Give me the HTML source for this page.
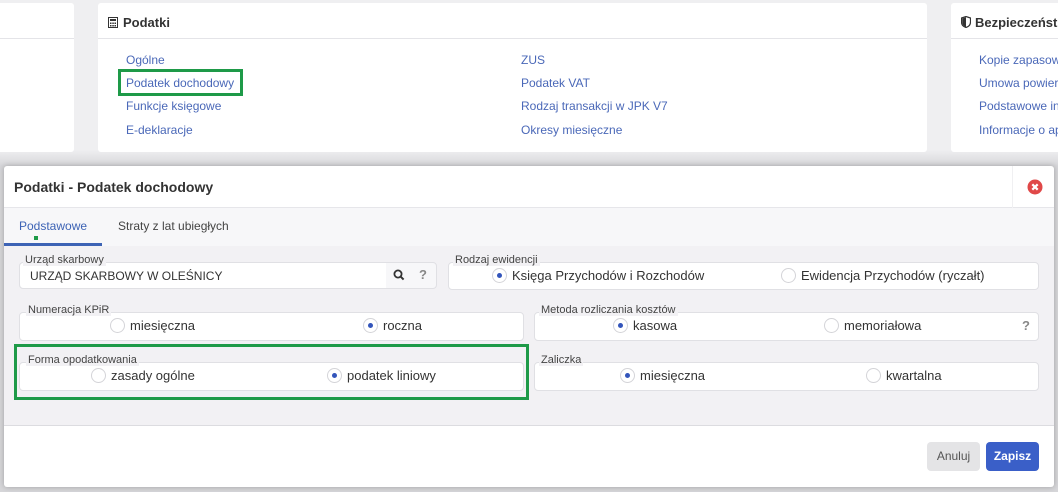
<!DOCTYPE html>
<html><head><meta charset="utf-8"><style>
*{box-sizing:border-box;margin:0;padding:0}
body{width:1058px;height:492px;overflow:hidden;background:linear-gradient(#efeff1 0,#efeff1 150px,#d6d6d9 166px,#d6d6d9 100%);font-family:"Liberation Sans",sans-serif;position:relative;color:#333}
.card{position:absolute;top:3px;height:149px;background:#fff;border-radius:3px}
.card .hd{height:36px;border-bottom:1px solid #e4e4e8;font-weight:bold;font-size:13px;color:#333;padding:12px 10px}
.lnk{position:absolute;font-size:12px;color:#4a68b8}
.modal{position:absolute;left:4px;top:166px;width:1050px;height:321px;background:#fff;border-radius:3px;box-shadow:0 0 6px rgba(0,0,0,.25);overflow:hidden}
.mh{height:42px;border-bottom:1px solid #e6e6ea;font-size:14px;font-weight:bold;color:#333;padding:13px 10px}
.tabs{position:absolute;top:42px;left:0;right:0;height:38px;background:#f7f7f9;font-size:12px}
.body{position:absolute;top:80px;left:0;right:0;height:180px;background:#f2f1f4;border-bottom:1px solid #dcdce0}
.fs{position:absolute;background:#fff;border:1px solid #e0e0e4;border-radius:4px;height:28px}
.lg{position:absolute;font-size:11px;color:#444;background:#f2f1f4;padding:0 2px;line-height:12px}
.r{position:absolute;font-size:13px;color:#333;top:5px;white-space:nowrap}
.r i{display:inline-block;width:15px;height:15px;border:1px solid #d4d4d8;border-radius:50%;vertical-align:-3px;margin-right:5px;position:relative;background:#fff}
.r i.on::after{content:"";position:absolute;left:4px;top:4px;width:5px;height:5px;border-radius:50%;background:#3355bb}
</style></head><body>
<div class="card" style="left:-4px;width:78px"><div class="hd"></div></div>
<div class="card" style="left:98px;width:829px"><div class="hd"><svg width="10" height="11" viewBox="0 0 10 11" style="vertical-align:-1px;margin-right:5px"><rect x=".5" y=".5" width="9" height="10" fill="none" stroke="#333"/><rect x="2" y="2" width="6" height="2" fill="#333"/><rect x="2" y="5.5" width="1.5" height="1.5" fill="#333"/><rect x="4.3" y="5.5" width="1.5" height="1.5" fill="#333"/><rect x="6.5" y="5.5" width="1.5" height="1.5" fill="#333"/><rect x="2" y="8" width="1.5" height="1.5" fill="#333"/><rect x="4.3" y="8" width="1.5" height="1.5" fill="#333"/><rect x="6.5" y="8" width="1.5" height="1.5" fill="#333"/></svg>Podatki</div></div>
<div class="card" style="left:951px;width:120px"><div class="hd" style="white-space:nowrap"><svg width="10" height="12" viewBox="0 0 10 12" style="vertical-align:-1px;margin-right:4px"><path d="M5 .5L9.5 2v4c0 3-2.2 4.8-4.5 5.5C2.7 10.8.5 9 .5 6V2z" fill="none" stroke="#333" stroke-width="1.2"/><path d="M5 1.2V11C2.9 10.3 1.2 8.6 1.2 6V2.5z" fill="#333"/></svg>Bezpieczeńst</div></div>
<div class="lnk" style="left:126px;top:53px">Ogólne</div>
<div class="lnk" style="left:126px;top:76px">Podatek dochodowy</div>
<div style="position:absolute;left:118px;top:69px;width:125px;height:27px;border:3px solid #1e9a48"></div>
<div class="lnk" style="left:126px;top:99px">Funkcje księgowe</div>
<div class="lnk" style="left:126px;top:123px">E-deklaracje</div>
<div class="lnk" style="left:521px;top:53px">ZUS</div>
<div class="lnk" style="left:521px;top:76px">Podatek VAT</div>
<div class="lnk" style="left:521px;top:99px">Rodzaj transakcji w JPK V7</div>
<div class="lnk" style="left:521px;top:123px">Okresy miesięczne</div>
<div class="lnk" style="left:979px;top:53px;white-space:nowrap">Kopie zapasowe</div>
<div class="lnk" style="left:979px;top:76px;white-space:nowrap">Umowa powierzenia</div>
<div class="lnk" style="left:979px;top:99px;white-space:nowrap">Podstawowe informacje</div>
<div class="lnk" style="left:979px;top:123px;white-space:nowrap">Informacje o aplikacji</div>

<div class="modal">
<div class="mh">Podatki - Podatek dochodowy</div>
<div style="position:absolute;right:0;top:0;width:42px;height:42px;border-left:1px solid #f0f0f2"><svg width="16" height="16" viewBox="0 0 16 16" style="position:absolute;left:14px;top:13px"><circle cx="8" cy="8" r="7.5" fill="#e04848"/><path d="M5.3 5.3l5.4 5.4M10.7 5.3l-5.4 5.4" stroke="#fff" stroke-width="2.2"/></svg></div>
<div class="tabs">
<div style="position:absolute;left:15px;top:11px;color:#3d63b5">Podstawowe</div>
<div style="position:absolute;left:30px;top:28px;width:4px;height:4px;background:#1e9a48"></div>
<div style="position:absolute;left:0;top:35px;width:98px;height:3px;background:#3d63b5"></div>
<div style="position:absolute;left:114px;top:11px;color:#444">Straty z lat ubiegłych</div>
</div>
<div class="body">
<div class="fs" style="left:15px;top:16px;width:418px;height:27px;background:#f7f7f9"><div style="position:absolute;left:0;top:0;width:366px;height:25px;background:#fff;border-radius:4px 0 0 4px"></div><div style="position:absolute;left:10px;top:6px;font-size:12px;color:#333">URZĄD SKARBOWY W OLEŚNICY</div><svg width="12" height="12" viewBox="0 0 12 12" style="position:absolute;left:373px;top:6px"><circle cx="5" cy="5" r="3.6" fill="none" stroke="#333" stroke-width="1.8"/><path d="M7.6 7.6l3 3" stroke="#333" stroke-width="2"/></svg><div style="position:absolute;left:399px;top:4px;font-size:13px;font-weight:bold;color:#888">?</div></div>
<div class="lg" style="left:19px;top:8px">Urząd skarbowy</div>
<div class="fs" style="left:444px;top:16px;width:591px;height:28px"><div class="r" style="left:43px"><i class="on"></i>Księga Przychodów i Rozchodów</div><div class="r" style="left:332px"><i></i>Ewidencja Przychodów (ryczałt)</div></div>
<div class="lg" style="left:449px;top:8px">Rodzaj ewidencji</div>

<div class="fs" style="left:15px;top:66px;width:505px;height:29px"><div class="r" style="left:90px"><i></i>miesięczna</div><div class="r" style="left:343px"><i class="on"></i>roczna</div></div>
<div class="lg" style="left:22px;top:58px">Numeracja KPiR</div>
<div class="fs" style="left:530px;top:66px;width:505px;height:29px"><div class="r" style="left:78px"><i class="on"></i>kasowa</div><div class="r" style="left:289px"><i></i>memoriałowa</div><div style="position:absolute;right:8px;top:5px;font-size:13px;font-weight:bold;color:#888">?</div></div>
<div class="lg" style="left:535px;top:58px">Metoda rozliczania kosztów</div>

<div style="position:absolute;left:10px;top:98px;width:515px;height:56px;border:3px solid #1e9a48"></div>
<div class="fs" style="left:15px;top:116px;width:505px;height:29px"><div class="r" style="left:71px"><i></i>zasady ogólne</div><div class="r" style="left:307px"><i class="on"></i>podatek liniowy</div></div>
<div class="lg" style="left:22px;top:108px">Forma opodatkowania</div>
<div class="fs" style="left:530px;top:116px;width:505px;height:29px"><div class="r" style="left:85px"><i class="on"></i>miesięczna</div><div class="r" style="left:331px"><i></i>kwartalna</div></div>
<div class="lg" style="left:535px;top:108px">Zaliczka</div>
</div>
<div style="position:absolute;left:923px;top:276px;width:53px;height:29px;background:#e4e4e6;border-radius:4px;font-size:12px;color:#555;text-align:center;line-height:29px">Anuluj</div>
<div style="position:absolute;left:982px;top:276px;width:53px;height:29px;background:#3a5fc8;border-radius:4px;font-size:12px;font-weight:bold;color:#fff;text-align:center;line-height:29px">Zapisz</div>
</div>
</body></html>
